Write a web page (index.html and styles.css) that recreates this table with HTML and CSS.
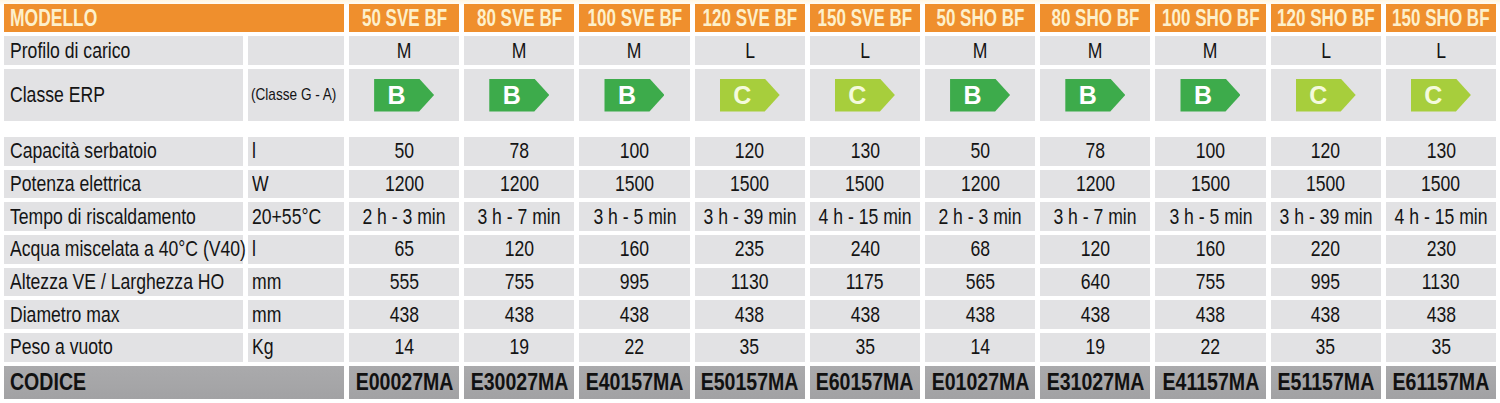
FILE: index.html
```html
<!DOCTYPE html>
<html lang="it">
<head>
<meta charset="utf-8">
<title>Scheda tecnica</title>
<link rel="stylesheet" href="styles.css">
</head>
<body>
<div class="sheet">
  <div class="tbl">
    <div class="hd hd-label"><span class="t">MODELLO</span></div>
    <div class="hd"><span class="t">50 SVE BF</span></div>
    <div class="hd"><span class="t">80 SVE BF</span></div>
    <div class="hd"><span class="t">100 SVE BF</span></div>
    <div class="hd"><span class="t">120 SVE BF</span></div>
    <div class="hd"><span class="t">150 SVE BF</span></div>
    <div class="hd"><span class="t">50 SHO BF</span></div>
    <div class="hd"><span class="t">80 SHO BF</span></div>
    <div class="hd"><span class="t">100 SHO BF</span></div>
    <div class="hd"><span class="t">120 SHO BF</span></div>
    <div class="hd"><span class="t">150 SHO BF</span></div>

    <div class="c lbl"><span class="t">Profilo di carico</span></div>
    <div class="c unit"></div>
    <div class="c v"><span class="t">M</span></div><div class="c v"><span class="t">M</span></div><div class="c v"><span class="t">M</span></div><div class="c v"><span class="t">L</span></div><div class="c v"><span class="t">L</span></div>
    <div class="c v"><span class="t">M</span></div><div class="c v"><span class="t">M</span></div><div class="c v"><span class="t">M</span></div><div class="c v"><span class="t">L</span></div><div class="c v"><span class="t">L</span></div>

    <div class="c lbl"><span class="t">Classe ERP</span></div>
    <div class="c unit small"><span class="t">(Classe G - A)</span></div>
    <div class="c v"><span class="badge b">B</span></div>
    <div class="c v"><span class="badge b">B</span></div>
    <div class="c v"><span class="badge b">B</span></div>
    <div class="c v"><span class="badge cc">C</span></div>
    <div class="c v"><span class="badge cc">C</span></div>
    <div class="c v"><span class="badge b">B</span></div>
    <div class="c v"><span class="badge b">B</span></div>
    <div class="c v"><span class="badge b">B</span></div>
    <div class="c v"><span class="badge cc">C</span></div>
    <div class="c v"><span class="badge cc">C</span></div>

    <div class="spacer"></div>

    <div class="c lbl"><span class="t">Capacità serbatoio</span></div>
    <div class="c unit"><span class="t">l</span></div>
    <div class="c v"><span class="t">50</span></div><div class="c v"><span class="t">78</span></div><div class="c v"><span class="t">100</span></div><div class="c v"><span class="t">120</span></div><div class="c v"><span class="t">130</span></div>
    <div class="c v"><span class="t">50</span></div><div class="c v"><span class="t">78</span></div><div class="c v"><span class="t">100</span></div><div class="c v"><span class="t">120</span></div><div class="c v"><span class="t">130</span></div>

    <div class="c lbl"><span class="t">Potenza elettrica</span></div>
    <div class="c unit"><span class="t">W</span></div>
    <div class="c v"><span class="t">1200</span></div><div class="c v"><span class="t">1200</span></div><div class="c v"><span class="t">1500</span></div><div class="c v"><span class="t">1500</span></div><div class="c v"><span class="t">1500</span></div>
    <div class="c v"><span class="t">1200</span></div><div class="c v"><span class="t">1200</span></div><div class="c v"><span class="t">1500</span></div><div class="c v"><span class="t">1500</span></div><div class="c v"><span class="t">1500</span></div>

    <div class="c lbl"><span class="t">Tempo di riscaldamento</span></div>
    <div class="c unit"><span class="t">20+55°C</span></div>
    <div class="c v"><span class="t">2 h - 3 min</span></div><div class="c v"><span class="t">3 h - 7 min</span></div><div class="c v"><span class="t">3 h - 5 min</span></div><div class="c v"><span class="t">3 h - 39 min</span></div><div class="c v"><span class="t">4 h - 15 min</span></div>
    <div class="c v"><span class="t">2 h - 3 min</span></div><div class="c v"><span class="t">3 h - 7 min</span></div><div class="c v"><span class="t">3 h - 5 min</span></div><div class="c v"><span class="t">3 h - 39 min</span></div><div class="c v"><span class="t">4 h - 15 min</span></div>

    <div class="c lbl"><span class="t">Acqua miscelata a 40°C (V40)</span></div>
    <div class="c unit"><span class="t">l</span></div>
    <div class="c v"><span class="t">65</span></div><div class="c v"><span class="t">120</span></div><div class="c v"><span class="t">160</span></div><div class="c v"><span class="t">235</span></div><div class="c v"><span class="t">240</span></div>
    <div class="c v"><span class="t">68</span></div><div class="c v"><span class="t">120</span></div><div class="c v"><span class="t">160</span></div><div class="c v"><span class="t">220</span></div><div class="c v"><span class="t">230</span></div>

    <div class="c lbl"><span class="t">Altezza VE / Larghezza HO</span></div>
    <div class="c unit"><span class="t">mm</span></div>
    <div class="c v"><span class="t">555</span></div><div class="c v"><span class="t">755</span></div><div class="c v"><span class="t">995</span></div><div class="c v"><span class="t">1130</span></div><div class="c v"><span class="t">1175</span></div>
    <div class="c v"><span class="t">565</span></div><div class="c v"><span class="t">640</span></div><div class="c v"><span class="t">755</span></div><div class="c v"><span class="t">995</span></div><div class="c v"><span class="t">1130</span></div>

    <div class="c lbl"><span class="t">Diametro max</span></div>
    <div class="c unit"><span class="t">mm</span></div>
    <div class="c v"><span class="t">438</span></div><div class="c v"><span class="t">438</span></div><div class="c v"><span class="t">438</span></div><div class="c v"><span class="t">438</span></div><div class="c v"><span class="t">438</span></div>
    <div class="c v"><span class="t">438</span></div><div class="c v"><span class="t">438</span></div><div class="c v"><span class="t">438</span></div><div class="c v"><span class="t">438</span></div><div class="c v"><span class="t">438</span></div>

    <div class="c lbl"><span class="t">Peso a vuoto</span></div>
    <div class="c unit"><span class="t">Kg</span></div>
    <div class="c v"><span class="t">14</span></div><div class="c v"><span class="t">19</span></div><div class="c v"><span class="t">22</span></div><div class="c v"><span class="t">35</span></div><div class="c v"><span class="t">35</span></div>
    <div class="c v"><span class="t">14</span></div><div class="c v"><span class="t">19</span></div><div class="c v"><span class="t">22</span></div><div class="c v"><span class="t">35</span></div><div class="c v"><span class="t">35</span></div>

    <div class="code code-label"><span class="t">CODICE</span></div>
    <div class="code"><span class="t">E00027MA</span></div>
    <div class="code"><span class="t">E30027MA</span></div>
    <div class="code"><span class="t">E40157MA</span></div>
    <div class="code"><span class="t">E50157MA</span></div>
    <div class="code"><span class="t">E60157MA</span></div>
    <div class="code"><span class="t">E01027MA</span></div>
    <div class="code"><span class="t">E31027MA</span></div>
    <div class="code"><span class="t">E41157MA</span></div>
    <div class="code"><span class="t">E51157MA</span></div>
    <div class="code"><span class="t">E61157MA</span></div>
  </div>
</div>
</body>
</html>
```

FILE: styles.css
```css
html, body {
  margin: 0;
  padding: 0;
  background: #ffffff;
}

body {
  font-family: "Liberation Sans", Arial, sans-serif;
  color: #141414;
}

.sheet {
  width: 1500px;
  height: 403px;
  box-sizing: border-box;
  padding: 4px 4px 0 4px;
  background: linear-gradient(#fff6e2 0, #ffffff 6px);
  overflow: hidden;
}

.tbl {
  display: grid;
  grid-template-columns: 239px 96px repeat(10, minmax(0, 1fr));
  grid-template-rows: 28px 29px 52px 8px repeat(7, 28.7px) 33px;
  column-gap: 5px;
  row-gap: 4px;
}

/* condensed text: the original typeface is a narrow grotesque */
.t {
  display: inline-block;
  white-space: nowrap;
  transform: scaleX(0.8);
  transform-origin: center center;
}

.hd {
  background: #ef8f2d;
  color: #fdf0cb;
  font-weight: bold;
  font-size: 23px;
  display: flex;
  align-items: center;
  justify-content: center;
  white-space: nowrap;
}

.hd .t {
  transform: scaleX(0.74);
}

.hd-label {
  grid-column: span 2;
  justify-content: flex-start;
  padding-left: 6px;
}

.hd-label .t {
  transform-origin: left center;
  transform: scaleX(0.76);
}

.c {
  background: #e2e2e4;
  font-size: 22px;
  display: flex;
  align-items: center;
  white-space: nowrap;
  min-width: 0;
}

.lbl {
  padding-left: 6px;
}

.lbl .t,
.unit .t {
  transform-origin: left center;
}

.lbl .t {
  transform: scaleX(0.8);
}

.unit {
  padding-left: 4px;
}

.unit.small {
  font-size: 17px;
  padding-left: 3px;
}

.v {
  justify-content: center;
}

.spacer {
  grid-column: 1 / -1;
}

.badge {
  display: inline-flex;
  align-items: center;
  justify-content: center;
  width: 60px;
  height: 33px;
  padding-right: 15px;
  box-sizing: border-box;
  clip-path: polygon(0 0, 45px 0, 60px 50%, 45px 100%, 0 100%);
  color: #ffffff;
  font-weight: bold;
  font-size: 25px;
}

.badge.b {
  background: #3dab4b;
}

.badge.cc {
  background: #a7ce3c;
  color: #f4fadc;
}

.code {
  background: linear-gradient(#aaaaac, #a2a2a4);
  font-weight: bold;
  font-size: 23px;
  display: flex;
  align-items: center;
  justify-content: center;
  white-space: nowrap;
  color: #111111;
  min-width: 0;
}

.code .t {
  transform: scaleX(0.85);
}

.code-label {
  grid-column: span 2;
  justify-content: flex-start;
  padding-left: 6px;
}

.code-label .t {
  transform-origin: left center;
}
```
